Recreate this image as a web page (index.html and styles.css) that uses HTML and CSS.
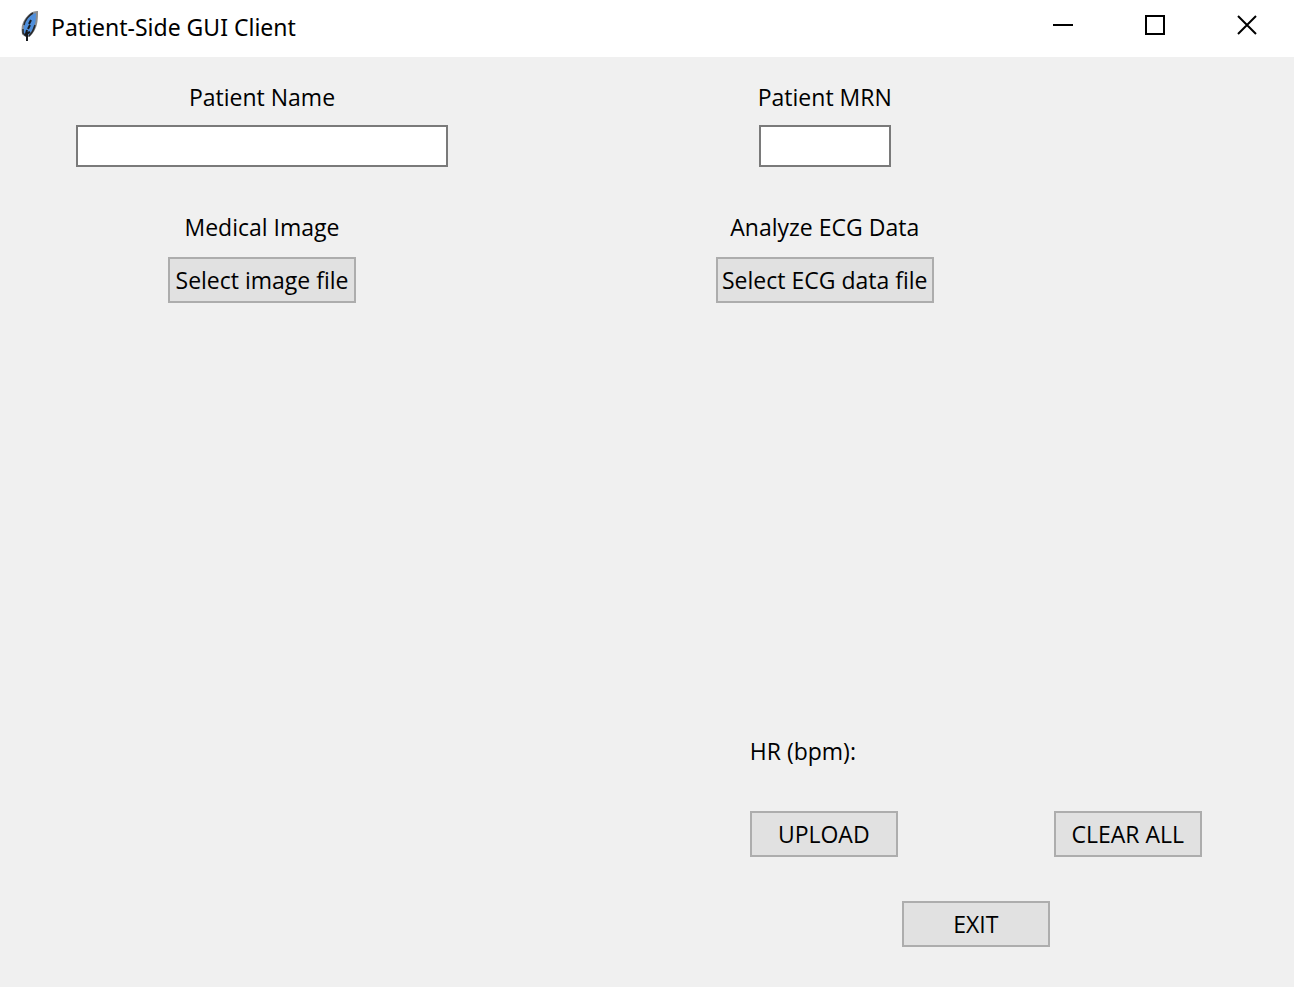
FILE: index.html
```html
<!DOCTYPE html>
<html lang="en">
<head>
<meta charset="utf-8">
<title>Patient-Side GUI Client</title>
<link rel="stylesheet" href="styles.css">
</head>
<body>
<header class="titlebar">
  <svg class="feather" width="20" height="32" viewBox="0 0 20 32" aria-hidden="true">
    <path d="M17 1C13 1 9 4 6 8C3 12 2 18 3 23L6 25H9C12 22 15 18 16 13C17 9 17 5 17 1Z" fill="#4f8fdc" stroke="#8a8c8f" stroke-width="2"/>
    <path d="M13 2C9 4 5 9 4 14M3 18V22L6 25M9 25C12 22 14 18 15 14" fill="none" stroke="#26292e" stroke-width="1.5"/>
    <path d="M11 9L9 13M10 14L8 18M7 19L6 23L10 21M7 22V30" fill="none" stroke="#16191e" stroke-width="2"/>
  </svg>
  <h1 class="title">Patient-Side GUI Client</h1>
  <div class="window-controls">
    <button class="window-button" type="button" aria-label="Minimize"><svg width="20" height="20" viewBox="0 0 20 20"><path d="M0 10H20"/></svg></button>
    <button class="window-button" type="button" aria-label="Maximize"><svg width="20" height="20" viewBox="0 0 20 20"><path d="M1 1H19V19H1Z"/></svg></button>
    <button class="window-button" type="button" aria-label="Close"><svg width="20" height="20" viewBox="0 0 20 20"><path d="M1 1L19 19M19 1L1 19"/></svg></button>
  </div>
</header>
<main class="client">
  <section class="patient">
    <div class="field">
      <label for="name">Patient Name</label>
      <input class="entry entry-name" id="name" type="text">
    </div>
    <div class="field picker">
      <label for="image-file">Medical Image</label>
      <button class="button button-image" id="image-file" type="button">Select image file</button>
    </div>
  </section>
  <section class="record">
    <div class="record-fields">
      <div class="field">
        <label for="mrn">Patient MRN</label>
        <input class="entry entry-mrn" id="mrn" type="text">
      </div>
      <div class="field picker">
        <label for="ecg-file">Analyze ECG Data</label>
        <button class="button button-ecg" id="ecg-file" type="button">Select ECG data file</button>
      </div>
    </div>
    <div class="actions">
      <p class="heart-rate">HR (bpm):</p>
      <button class="button upload" type="button">UPLOAD</button>
      <button class="button clear" type="button">CLEAR ALL</button>
      <button class="button exit" type="button">EXIT</button>
    </div>
  </section>
</main>
</body>
</html>
```
FILE: styles.css
```css
* {
  box-sizing: border-box;
}

body {
  margin: 0;
  min-height: 100vh;
  display: flex;
  flex-direction: column;
  background: #f0f0f0;
  color: #000;
  font-family: "Segoe UI", "Open Sans", sans-serif;
  font-size: 23px;
  line-height: 32px;
}

button,
input {
  font: inherit;
  color: inherit;
  border-radius: 0;
}

.titlebar {
  display: flex;
  align-items: center;
  height: 57px;
  padding: 0 1px 4px 20px;
  background: #fff;
}

.title {
  margin: 0 0 0 11px;
  font-family: "Segoe UI", "Noto Sans", sans-serif;
  font-size: 23px;
  font-weight: 400;
}

.window-controls {
  display: flex;
  align-self: flex-start;
  margin-left: auto;
}

.window-button {
  display: grid;
  place-items: center;
  width: 92px;
  height: 50px;
  padding: 0;
  border: 0;
  background: none;
}

.window-button svg {
  fill: none;
  stroke: #000;
  stroke-width: 2;
}

.client {
  flex: 1;
  display: grid;
  grid-template-columns: 523fr 771fr;
  padding: 24px 0 40px;
}

.patient {
  padding-left: 1px;
}

.field {
  display: flex;
  flex-direction: column;
  align-items: center;
  gap: 12px;
}

.picker {
  margin-top: 44px;
  gap: 14px;
}

.entry {
  height: 42px;
  padding: 2px 4px;
  border: 2px solid #7a7a7a;
  background: #fff;
}

.entry-name {
  width: 372px;
}

.entry-mrn {
  width: 132px;
}

.button {
  height: 46px;
  padding: 0;
  border: 2px solid #adadad;
  background: #e1e1e1;
  white-space: nowrap;
}

.button-image {
  width: 188px;
}

.button-ecg {
  width: 218px;
}

.record {
  display: flex;
  flex-direction: column;
  align-items: flex-start;
  justify-content: space-between;
  padding-left: 25%;
}

.actions {
  display: grid;
  grid-template-columns: repeat(3, 148px);
  gap: 44px 4px;
  margin-left: 34px;
}

.heart-rate {
  grid-column: 1 / -1;
  margin: 0;
}

.clear {
  grid-column: 3;
}

.exit {
  grid-column: 2;
}
```
